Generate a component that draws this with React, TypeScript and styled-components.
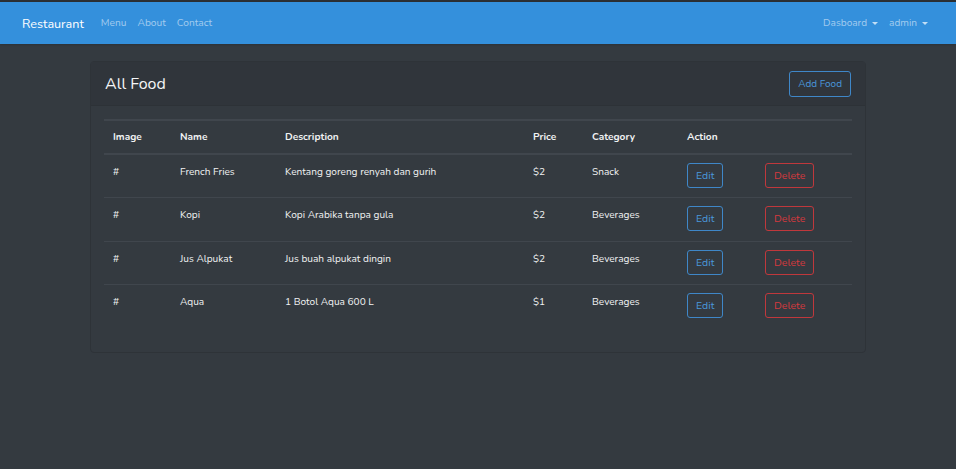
import React from "react";
import styled, { createGlobalStyle } from "styled-components";

const Global = createGlobalStyle`
  html, body { margin: 0; padding: 0; }
  body {
    background: #343a40;
    font-family: "Nunito", "Lato", "Noto Sans", sans-serif;
    color: #f3f4f6;
    min-height: 469px;
  }
  * { box-sizing: border-box; }
`;

const TopStrip = styled.div`
  height: 2px;
  background: #2b2f33;
`;

const Navbar = styled.nav`
  height: 42px;
  background: #3490dc;
  display: flex;
  align-items: center;
  justify-content: space-between;
  padding: 0 28px 0 22px;
  box-shadow: 0 1px 2px rgba(0, 0, 0, 0.15);
`;

const Left = styled.div`
  display: flex;
  align-items: center;
`;

const Brand = styled.a`
  color: #fff;
  font-size: 12.6px;
  margin-right: 17px;
  text-decoration: none;
`;

const NavLink = styled.a`
  color: rgba(255, 255, 255, 0.55);
  font-size: 10.2px;
  margin-right: 11px;
  text-decoration: none;
`;

const Right = styled.div`
  display: flex;
  align-items: center;
  gap: 11px;
`;

const Dropdown = styled.span`
  color: rgba(255, 255, 255, 0.55);
  font-size: 10.1px;
  display: inline-flex;
  align-items: center;
`;

const Caret = styled.span`
  display: inline-block;
  margin-left: 5px;
  width: 0;
  height: 0;
  border-left: 3px solid transparent;
  border-right: 3px solid transparent;
  border-top: 3px solid rgba(255, 255, 255, 0.7);
`;

const Main = styled.main`
  padding: 17px 90px;
`;

const Card = styled.section`
  background: #343a40;
  border: 1px solid #2e3338;
  border-radius: 4px;
  height: 292px;
`;

const CardHeader = styled.header`
  display: flex;
  align-items: center;
  justify-content: space-between;
  height: 44px;
  padding: 0 14px 0 14px;
  background: #30353b;
  border-bottom: 1px solid #2d3237;
`;

const Title = styled.h1`
  margin: 0;
  font-weight: 400;
  font-size: 16px;
  color: #f5f6f7;
`;

const OutlineButton = styled.button<{ $tone: "blue" | "red" }>`
  font-family: inherit;
  background: transparent;
  border: 1px solid ${(p) => (p.$tone === "blue" ? "#3f87c8" : "#c0383c")};
  color: ${(p) => (p.$tone === "blue" ? "#4a98dc" : "#d5393e")};
  border-radius: 3px;
  font-size: 10.5px;
  padding: 0 8px;
  height: 25px;
  cursor: pointer;
`;

const AddButton = styled(OutlineButton)`
  height: 26px;
  padding: 0 8px;
  font-size: 10px;
`;

const CardBody = styled.div`
  padding: 13px 13px;
`;

const Table = styled.table`
  width: 100%;
  border-collapse: collapse;
  font-size: 10.1px;
  color: #f1f2f3;
  th, td {
    text-align: left;
    border-top: 2px solid #40464d;
  }
  th {
    font-weight: 700;
    height: 34px;
    padding: 0 9px;
    border-bottom: 2px solid #40464d;
  }
  td {
    height: 43.5px;
    padding: 10px 9px 0;
    vertical-align: top;
    border-top: 1px solid #40464d;
  }
  tbody tr:first-child td { border-top: none; }
`;

const ActionCell = styled.td`
  && { padding-top: 8px; }
`;

const items = [
  { name: "French Fries", desc: "Kentang goreng renyah dan gurih", price: "$2", cat: "Snack" },
  { name: "Kopi", desc: "Kopi Arabika tanpa gula", price: "$2", cat: "Beverages" },
  { name: "Jus Alpukat", desc: "Jus buah alpukat dingin", price: "$2", cat: "Beverages" },
  { name: "Aqua", desc: "1 Botol Aqua 600 L", price: "$1", cat: "Beverages" },
];

export default function App() {
  return (
    <>
      <Global />
      <TopStrip />
      <Navbar>
        <Left>
          <Brand>Restaurant</Brand>
          <NavLink>Menu</NavLink>
          <NavLink>About</NavLink>
          <NavLink>Contact</NavLink>
        </Left>
        <Right>
          <Dropdown>Dasboard<Caret /></Dropdown>
          <Dropdown>admin<Caret /></Dropdown>
        </Right>
      </Navbar>
      <Main>
        <Card>
          <CardHeader>
            <Title>All Food</Title>
            <AddButton $tone="blue">Add Food</AddButton>
          </CardHeader>
          <CardBody>
            <Table>
              <colgroup>
                <col style={{ width: 67 }} />
                <col style={{ width: 105 }} />
                <col style={{ width: 248 }} />
                <col style={{ width: 59 }} />
                <col style={{ width: 95 }} />
                <col style={{ width: 78 }} />
                <col />
              </colgroup>
              <thead>
                <tr>
                  <th>Image</th>
                  <th>Name</th>
                  <th>Description</th>
                  <th>Price</th>
                  <th>Category</th>
                  <th>Action</th>
                  <th></th>
                </tr>
              </thead>
              <tbody>
                {items.map((it) => (
                  <tr key={it.name}>
                    <td>#</td>
                    <td>{it.name}</td>
                    <td>{it.desc}</td>
                    <td>{it.price}</td>
                    <td>{it.cat}</td>
                    <ActionCell><OutlineButton $tone="blue">Edit</OutlineButton></ActionCell>
                    <ActionCell><OutlineButton $tone="red">Delete</OutlineButton></ActionCell>
                  </tr>
                ))}
              </tbody>
            </Table>
          </CardBody>
        </Card>
      </Main>
    </>
  );
}
